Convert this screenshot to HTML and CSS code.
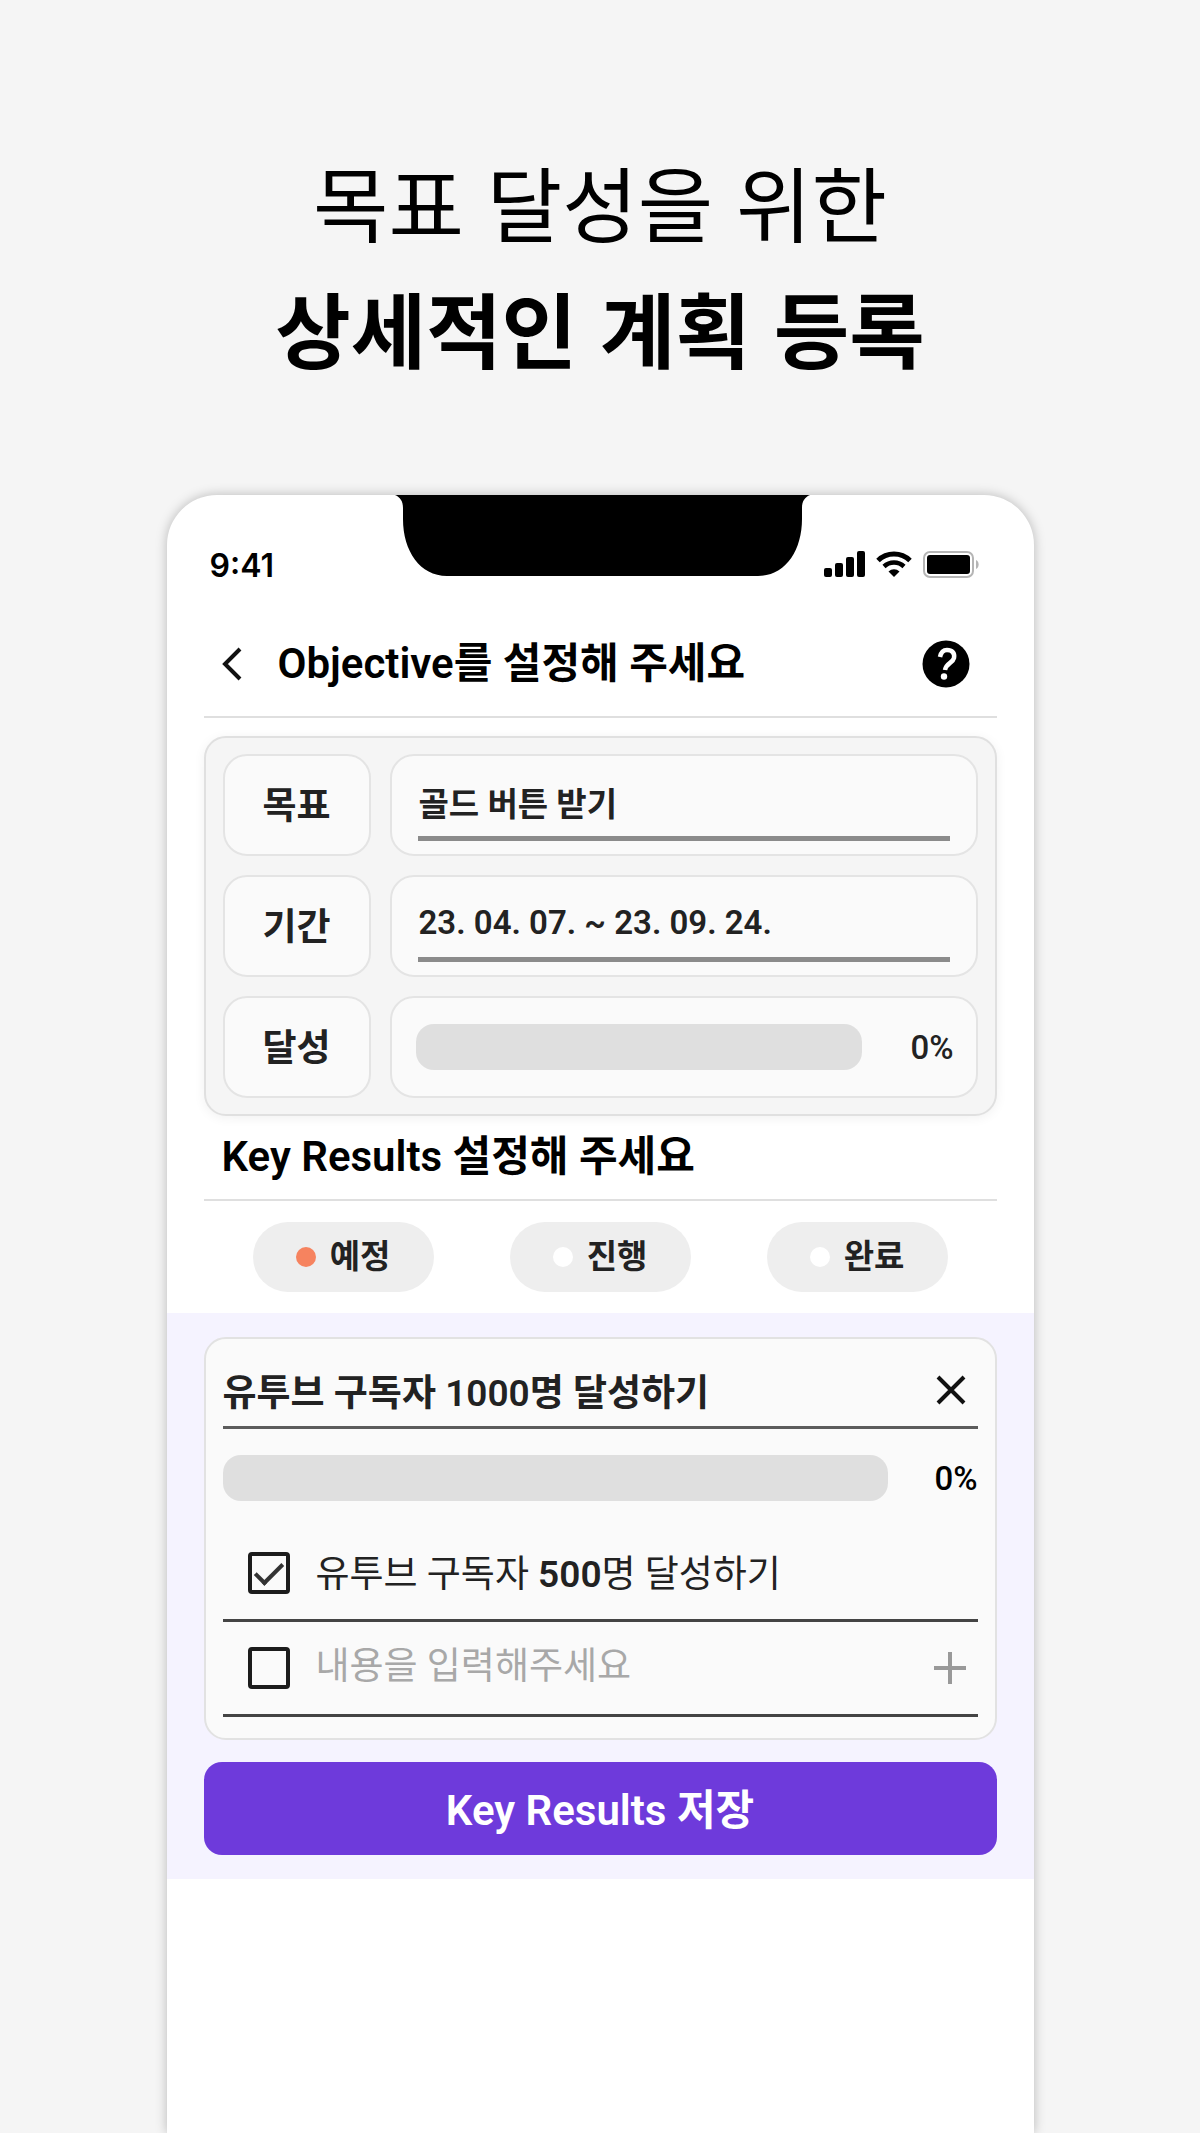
FILE: index.html
```html
<!DOCTYPE html>
<html lang="ko">

<head>
    <meta charset="UTF-8">
    <meta name="viewport" content="width=device-width, initial-scale=1.0">
    <title>Objective 설정</title>
    <link rel="stylesheet" href="styles.css">
</head>

<body>
    <h1 class="headline">
        목표 달성을 위한<br>
        <strong>상세적인 계획 등록</strong>
    </h1>

    <main class="phone">
        <div class="status-bar">
            <span class="time">9:41</span>
            <svg class="notch" viewBox="0 0 415 81" aria-hidden="true">
                <path d="M0 0H415C410 2 407 6 407 13V24C407 56 390 81 363 81H52C25 81 8 56 8 24V13C8 6 5 2 0 0Z" />
            </svg>
            <div class="status-icons">
                <svg width="41" height="26" viewBox="0 0 41 26" aria-hidden="true">
                    <rect x="0" y="17" width="8" height="9" rx="2" />
                    <rect x="11" y="12" width="8" height="14" rx="2" />
                    <rect x="22" y="6" width="8" height="20" rx="2" />
                    <rect x="33" y="0" width="8" height="26" rx="2" />
                </svg>
                <svg width="36" height="26" viewBox="0 0 36 26" aria-hidden="true">
                    <path d="M2 9.500A23 23 0 0 1 34 9.500" fill="none" stroke="#000" stroke-width="5" />
                    <path d="M8 15.500A14.500 14.500 0 0 1 28 15.500" fill="none" stroke="#000" stroke-width="4.500" />
                    <path d="M12.500 20.500A8 8 0 0 1 23.500 20.500L18 26Z" />
                </svg>
                <svg width="56" height="27" viewBox="0 0 56 27" aria-hidden="true">
                    <rect x="1" y="1" width="49" height="25" rx="6" fill="none" stroke="#b5b5b5" stroke-width="2" />
                    <rect x="4" y="4" width="43" height="19" rx="3" />
                    <path d="M53 9C56.500 10 56.500 17 53 18Z" fill="#b5b5b5" />
                </svg>
            </div>
        </div>

        <header class="page-header">
            <button class="icon-button" type="button" aria-label="뒤로">
                <svg width="20" height="34" viewBox="0 0 20 34">
                    <path d="M18 2L3 17L18 32" fill="none" stroke="#111" stroke-width="4" />
                </svg>
            </button>
            <h2>Objective를 설정해 주세요</h2>
            <button class="icon-button help" type="button" aria-label="도움말">
                <svg width="48" height="48" viewBox="0 0 48 48">
                    <circle cx="24" cy="24" r="23.500" />
                    <path d="M18 17C19 12 22 10 25 10C30 10 33 13 32 18C31 23 24 23 23 30" fill="none" stroke="#fff" stroke-width="4.500" />
                    <circle cx="22" cy="36.500" r="3.200" fill="#fff" />
                </svg>
            </button>
        </header>

        <section class="objective">
            <label class="cell name" for="goal">목표</label>
            <div class="cell field">
                <input id="goal" type="text" value="골드 버튼 받기">
            </div>
            <label class="cell name" for="period">기간</label>
            <div class="cell field">
                <input id="period" type="text" value="23. 04. 07. ~ 23. 09. 24.">
            </div>
            <label class="cell name" for="rate">달성</label>
            <div class="cell rate">
                <progress id="rate" value="0" max="100"></progress>
                <span>0%</span>
            </div>
        </section>

        <h2 class="section-title">Key Results 설정해 주세요</h2>

        <div class="tabs">
            <button class="tab active" type="button" aria-pressed="true">예정</button>
            <button class="tab" type="button" aria-pressed="false">진행</button>
            <button class="tab" type="button" aria-pressed="false">완료</button>
        </div>

        <form class="results">
            <div class="card">
                <div class="card-title">
                    <input type="text" value="유투브 구독자 1000명 달성하기" aria-label="Key Result">
                    <button class="icon-button" type="button" aria-label="삭제">
                        <svg width="30" height="30" viewBox="0 0 30 30">
                            <path d="M2 2L28 28M28 2L2 28" fill="none" stroke="#111" stroke-width="4" />
                        </svg>
                    </button>
                </div>
                <div class="card-rate">
                    <progress value="0" max="100" aria-label="달성률"></progress>
                    <span>0%</span>
                </div>
                <div class="task">
                    <input id="task-1" type="checkbox" checked>
                    <label for="task-1">유투브 구독자 <b>500</b>명 달성하기</label>
                </div>
                <div class="task">
                    <input type="checkbox" aria-label="완료">
                    <input type="text" placeholder="내용을 입력해주세요" aria-label="내용">
                    <button class="icon-button" type="button" aria-label="추가">
                        <svg width="34" height="34" viewBox="0 0 34 34">
                            <path d="M17 1V33M1 17H33" fill="none" stroke="#999" stroke-width="4" />
                        </svg>
                    </button>
                </div>
            </div>
            <button class="save" type="button">Key Results 저장</button>
        </form>
    </main>
</body>

</html>
```
FILE: styles.css
```css
* {
    margin: 0;
    padding: 0;
    box-sizing: border-box;
}

body {
    min-height: 100vh;
    display: flex;
    flex-direction: column;
    align-items: center;
    background-color: #f5f5f5;
    color: #000;
    font-family: Roboto, "Noto Sans CJK KR", sans-serif;
}

input,
button {
    font: inherit;
    color: inherit;
    background: none;
    border: none;
    outline: none;
}

button {
    cursor: pointer;
}

svg {
    display: block;
}

.headline {
    padding: 138px 24px 105px;
    font-family: "Noto Sans CJK KR", sans-serif;
    font-size: 82px;
    font-weight: 400;
    line-height: 126px;
    text-align: center;
}

.headline strong {
    font-weight: 700;
}

/* Phone frame */
.phone {
    flex: 1;
    width: 100%;
    max-width: 867px;
    background-color: #fff;
    border-radius: 50px 50px 0 0;
    box-shadow: 0 0 12px rgba(0, 0, 0, 0.25);
}

.status-bar {
    display: grid;
    grid-template-columns: 1fr 415px 1fr;
    height: 117px;
    padding-left: 5px;
}

.time {
    padding: 51px 0 0 38px;
    font-family: Inter, sans-serif;
    font-size: 32px;
    font-weight: 600;
    line-height: 40px;
}

.notch {
    width: 415px;
    height: 81px;
}

.status-icons {
    display: flex;
    gap: 11px;
    padding: 56px 0 0 14px;
}

.icon-button {
    flex: none;
}

/* Header */
.page-header {
    display: flex;
    align-items: center;
    height: 106px;
    margin: 0 37px;
    padding: 0 27px 0 18px;
    border-bottom: 2px solid #dfdfdf;
}

.page-header h2 {
    margin-left: 36px;
}

.help {
    margin-left: auto;
}

h2 {
    font-size: 42px;
    font-weight: 600;
    line-height: 60px;
}

/* Objective panel */
.objective {
    display: grid;
    grid-template-columns: 148px 1fr;
    grid-auto-rows: 102px;
    gap: 19px;
    margin: 18px 37px 0;
    padding: 16px 17px;
    background-color: #f5f5f5;
    border: 2px solid #e0e0e0;
    border-radius: 22px;
    box-shadow: 0 2px 12px rgba(0, 0, 0, 0.06);
    color: #222;
}

.cell {
    display: flex;
    align-items: center;
    background-color: #fafafa;
    border: 2px solid #e4e4e4;
    border-radius: 24px;
}

.name {
    justify-content: center;
    padding-bottom: 4px;
    font-size: 37px;
    font-weight: 600;
}

.field {
    padding: 0 26px 2px;
}

.field input {
    width: 100%;
    height: 74px;
    padding-left: 1px;
    border-bottom: 5px solid #8b8b8b;
    font-size: 33px;
    font-weight: 600;
}

.rate {
    padding: 0 22px 0 24px;
    gap: 48px;
}

.rate span,
.card-rate span {
    font-size: 33px;
    font-weight: 500;
}

progress {
    flex: 1;
    min-width: 0;
    height: 46px;
    appearance: none;
    border: none;
    border-radius: 18px;
    overflow: hidden;
}

progress::-webkit-progress-bar {
    background-color: #dfdfdf;
}

progress::-webkit-progress-value {
    background-color: #6e3adb;
}

/* Key results */
.section-title {
    margin: 0 37px;
    padding: 11px 18px 12px;
    border-bottom: 2px solid #dfdfdf;
}

.tabs {
    display: flex;
    justify-content: center;
    gap: 76px;
    padding: 21px 0;
}

.tab {
    display: flex;
    align-items: center;
    justify-content: center;
    gap: 14px;
    width: 181px;
    height: 70px;
    background-color: #eee;
    border-radius: 35px;
    color: #222;
    font-size: 33px;
    font-weight: 600;
    line-height: 40px;
}

.tab::before {
    content: "";
    width: 20px;
    height: 20px;
    border-radius: 50%;
    background-color: #fff;
}

.tab.active::before {
    background-color: #f6835f;
}

.results {
    padding: 24px 37px;
    background-color: #f5f3ff;
}

.card {
    padding: 0 17px 21px;
    background-color: #fafafa;
    border: 2px solid #e2e2e2;
    border-radius: 22px;
    color: #222;
}

.card input[type="text"] {
    flex: 1;
    min-width: 0;
    font-size: 37px;
}

.card-title {
    display: flex;
    align-items: center;
    height: 90px;
    padding: 14px 12px 0 0;
    border-bottom: 3px solid #5c5c5c;
}

.card-title input[type="text"] {
    font-weight: 600;
}

.card-rate {
    display: flex;
    align-items: center;
    gap: 46px;
    height: 98px;
    color: #000;
}

.task {
    display: flex;
    align-items: center;
    gap: 26px;
    height: 95px;
    padding: 0 11px 0 25px;
    border-bottom: 3px solid #444;
    font-size: 37px;
}

.task label,
.task input[type="text"] {
    padding-bottom: 4px;
}

.task b {
    font-weight: 600;
}

.task input[type="checkbox"] {
    flex: none;
    display: grid;
    place-items: center;
    width: 42px;
    height: 42px;
    appearance: none;
    border: 4px solid #1c1c1c;
    border-radius: 4px;
}

.task input[type="checkbox"]:checked::before {
    content: "";
    width: 24px;
    height: 11px;
    border-left: 4px solid #333;
    border-bottom: 4px solid #333;
    transform: translateY(-3px) rotate(-45deg);
}

.task input::placeholder {
    color: #a8a8a8;
}

.save {
    width: 100%;
    height: 93px;
    margin-top: 22px;
    padding-bottom: 5px;
    background-color: #6e3adb;
    border-radius: 18px;
    color: #fff;
    font-size: 42px;
    font-weight: 600;
}

@media (max-width: 768px) {
    .headline {
        padding: 64px 24px;
        font-size: 48px;
        line-height: 72px;
    }

    .status-bar {
        grid-template-columns: 1fr auto 1fr;
    }

    .notch {
        width: 200px;
        height: 39px;
    }

    .tabs {
        gap: 16px;
    }
}
```
